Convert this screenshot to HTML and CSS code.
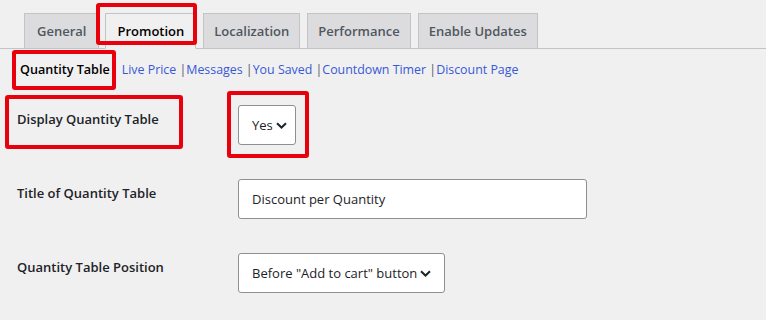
FILE: index.html
```html
<!DOCTYPE html>
<html>
<head>
<meta charset="utf-8">
<link rel="stylesheet" href="styles.css">
</head>
<body>
<div class="wrap">
  <nav class="tabs">
    <a class="tab">General</a>
    <a class="tab active">Promotion</a>
    <a class="tab">Localization</a>
    <a class="tab">Performance</a>
    <a class="tab">Enable Updates</a>
  </nav>
  <ul class="subnav">
    <li class="current">Quantity Table</li>
    <li><a>Live Price</a> |</li>
    <li><a>Messages</a> |</li>
    <li><a>You Saved</a> |</li>
    <li><a>Countdown Timer</a> |</li>
    <li><a>Discount Page</a></li>
  </ul>
  <div class="form">
    <div class="row">
      <div class="label">Display Quantity Table</div>
      <div class="field">
        <div class="select sel-yes"><span>Yes</span><svg class="chev" viewBox="0 0 11 7"><path d="M1 1.2l4.5 4.3 4.5-4.3" fill="none" stroke="#1d2327" stroke-width="2"/></svg></div>
      </div>
    </div>
    <div class="row">
      <div class="label">Title of Quantity Table</div>
      <div class="field">
        <div class="input">Discount per Quantity</div>
      </div>
    </div>
    <div class="row">
      <div class="label">Quantity Table Position</div>
      <div class="field">
        <div class="select sel-pos"><span>Before "Add to cart" button</span><svg class="chev" viewBox="0 0 11 7"><path d="M1 1.2l4.5 4.3 4.5-4.3" fill="none" stroke="#1d2327" stroke-width="2"/></svg></div>
      </div>
    </div>
  </div>
</div>
<div class="mark m-promo"></div>
<div class="mark m-qt"></div>
<div class="mark m-disp"></div>
<div class="mark m-yes"></div>
</body>
</html>
```
FILE: styles.css
```css
html, body {
  margin: 0;
  padding: 0;
  background: #f0f0f1;
  font-family: "Open Sans", "Noto Sans", sans-serif;
  color: #1d2327;
}
.wrap {
  width: 766px;
  height: 320px;
  overflow: hidden;
}
.tabs {
  display: flex;
  align-items: flex-end;
  padding: 13px 0 0 24px;
  height: 35px;
  border-bottom: 1px solid #c3c4c7;
}
.tab {
  box-sizing: border-box;
  height: 36px;
  margin-bottom: -1px;
  margin-right: 7px;
  padding: 0 10px;
  display: flex;
  align-items: center;
  font-size: 13px;
  font-weight: 600;
  color: #50575e;
  background: #dcdcde;
  border: 1px solid #c3c4c7;
  white-space: nowrap;
}
.tab:first-child { padding: 0 12px; margin-right: 6px; }
.tab.active {
  background: #f0f0f1;
  color: #000;
  border-bottom-color: #f0f0f1;
  padding: 0 11px;
}
.subnav {
  list-style: none;
  margin: 0;
  padding: 0 0 0 20px;
  height: 41px;
  display: flex;
  align-items: center;
  font-size: 12.4px;
  color: #50575e;
}
.subnav li { white-space: pre; }
.subnav li.current {
  font-weight: 600;
  font-size: 12.6px;
  color: #000;
  margin-right: 12px;
}
.subnav a { color: #3858d6; }
.form {
  padding-left: 17px;
}
.row {
  display: grid;
  grid-template-columns: 221px 1fr;
  height: 74px;
}
.label {
  font-size: 13px;
  font-weight: 600;
  padding-top: 20px;
  line-height: 18px;
}
.field {
  padding-top: 15px;
}
.select, .input {
  box-sizing: border-box;
  height: 40px;
  background: #fff;
  border: 1px solid #8c8f94;
  border-radius: 3px;
  display: flex;
  align-items: center;
  font-size: 13px;
  color: #1d2327;
  white-space: nowrap;
}
.select { padding: 0 9px 0 13px; gap: 3px; }
.sel-yes { width: 58px; }
.sel-pos { width: 207px; }
.input { width: 349px; padding-left: 13px; }
.chev { width: 11px; height: 7px; flex-shrink: 0; }
.mark {
  position: absolute;
  box-sizing: border-box;
  border: 4px solid #e8000c;
  border-radius: 3px;
}
.m-promo { left: 96px; top: 3px; width: 101px; height: 42px; }
.m-qt { left: 12px; top: 50px; width: 104px; height: 40px; }
.m-disp { left: 5px; top: 95px; width: 178px; height: 54px; }
.m-yes { left: 227px; top: 91px; width: 82px; height: 67px; }
```
